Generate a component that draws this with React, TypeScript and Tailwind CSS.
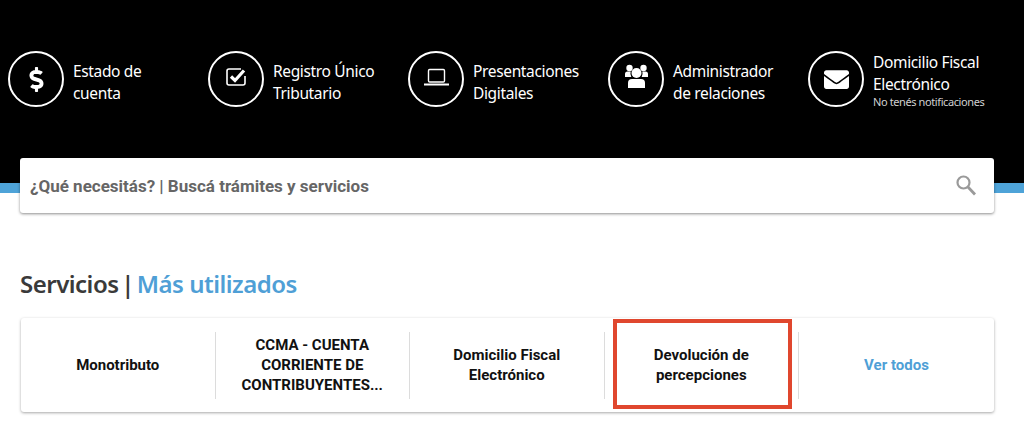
import { ReactNode } from "react";
import { FaDollarSign, FaEnvelope } from "react-icons/fa";

function IconoCheck() {
  return (
    <svg width="40" height="40" viewBox="0 0 40 40" fill="none" stroke="white">
      <path d="M25 10H13a2 2 0 0 0-2 2v12a2 2 0 0 0 2 2h14a2 2 0 0 0 2-2v-7" strokeWidth="1.6" />
      <path d="M15 17.5l4 4 9-10" strokeWidth="3.2" />
    </svg>
  );
}

function IconoLaptop() {
  return (
    <svg width="40" height="40" viewBox="0 0 40 40" fill="none" stroke="white">
      <rect x="12.5" y="10.5" width="16" height="12.5" rx="1.2" strokeWidth="1.4" />
      <path d="M8 25.5h25" strokeWidth="2" />
    </svg>
  );
}

function IconoUsuarios() {
  return (
    <svg width="40" height="40" viewBox="0 0 40 40" fill="white">
      <circle cx="13.5" cy="9" r="3.2" />
      <circle cx="27.5" cy="9" r="3.2" />
      <path d="M9 18v-3a2.5 2.5 0 0 1 2.5-2.5h3.2a7 7 0 0 0 .6 5.5H9z" />
      <path d="M32 18v-3a2.5 2.5 0 0 0-2.5-2.5h-3.2a7 7 0 0 1-.6 5.5H32z" />
      <circle cx="20.5" cy="14" r="5" />
      <path d="M12 29v-5a4 4 0 0 1 4-4h9a4 4 0 0 1 4 4v5z" />
    </svg>
  );
}

const accesos: { icon: ReactNode; lineas: string[]; nota?: string }[] = [
  { icon: <FaDollarSign size={25} />, lineas: ["Estado de", "cuenta"] },
  { icon: <IconoCheck />, lineas: ["Registro Único", "Tributario"] },
  { icon: <IconoLaptop />, lineas: ["Presentaciones", "Digitales"] },
  { icon: <IconoUsuarios />, lineas: ["Administrador", "de relaciones"] },
  { icon: <FaEnvelope size={25} />, lineas: ["Domicilio Fiscal", "Electrónico"], nota: "No tenés notificaciones" },
];

const servicios = [
  ["Monotributo"],
  ["CCMA - CUENTA", "CORRIENTE DE", "CONTRIBUYENTES..."],
  ["Domicilio Fiscal", "Electrónico"],
  ["Devolución de", "percepciones"],
];

export default function App() {
  return (
    <div className="w-[1024px] h-[444px] overflow-hidden bg-white font-['Roboto',sans-serif]">
      <header className="h-[183px] bg-black pt-[51px] pl-2 flex items-start">
        {accesos.map((a) => (
          <div key={a.lineas[0]} className="w-[200px] h-[56px] flex items-center gap-[9px] text-white">
            <div className="w-[56px] h-[56px] shrink-0 rounded-full border-2 border-white flex items-center justify-center">
              {a.icon}
            </div>
            <div
              className={
                (a.nota ? "pt-[1px] " : "pt-[5px] ") +
                "font-['Noto_Sans',sans-serif] text-[15.5px] leading-[22px] tracking-[-0.35px] whitespace-nowrap"
              }
            >
              {a.lineas.map((l) => (
                <div key={l}>{l}</div>
              ))}
              {a.nota && (
                <div className="text-[11px] leading-[14px] tracking-[-0.4px] text-[#d0d0d0]">{a.nota}</div>
              )}
            </div>
          </div>
        ))}
      </header>

      <div className="h-[10px] bg-[#4ea3d8]" />

      <div className="relative mx-5 -mt-[35px] h-[55px] w-[974px] rounded-[3px] bg-white shadow-[0_1px_3px_rgba(0,0,0,0.45)] flex items-center justify-between pl-[10px] pr-[8px]">
        <span className="pt-[2px] text-[17px] font-bold text-[#666666]">¿Qué necesitás? | Buscá trámites y servicios</span>
        <svg width="40" height="40" viewBox="0 0 40 40" fill="none" stroke="#9a9a9a">
          <circle cx="17.5" cy="16.5" r="6" strokeWidth="2.2" />
          <path d="M22 21l7 7.5" strokeWidth="2.8" />
        </svg>
      </div>

      <h2 className="mt-[54px] ml-5 font-['Noto_Sans',sans-serif] text-[24px] leading-[34px] font-semibold tracking-[-0.5px] [word-spacing:-3px] text-[#3a3a3a]">
        Servicios | <span className="[word-spacing:0px] text-[#4f9fd6]">Más utilizados</span>
      </h2>

      <div className="relative mt-[17px] ml-[21px] w-[973px] h-[94px] rounded-[3px] bg-white shadow-[0_1px_3px_rgba(0,0,0,0.35)] flex items-center">
        {servicios.map((s, i) => (
          <div
            key={s[0]}
            className="relative w-[194.5px] h-[67px] border-r border-[#dcdcdc] flex flex-col items-center justify-center text-[15px] leading-[20px] font-bold text-[#111111]"
          >
            {s.map((l) => (
              <div key={l}>{l}</div>
            ))}
            {i === 3 && (
              <div className="absolute left-[8px] top-[-13px] w-[179px] h-[90px] border-[4px] border-[#e0472e]" />
            )}
          </div>
        ))}
        <div className="flex-1 text-center text-[15px] font-bold text-[#4f9fd6]">Ver todos</div>
      </div>
    </div>
  );
}
